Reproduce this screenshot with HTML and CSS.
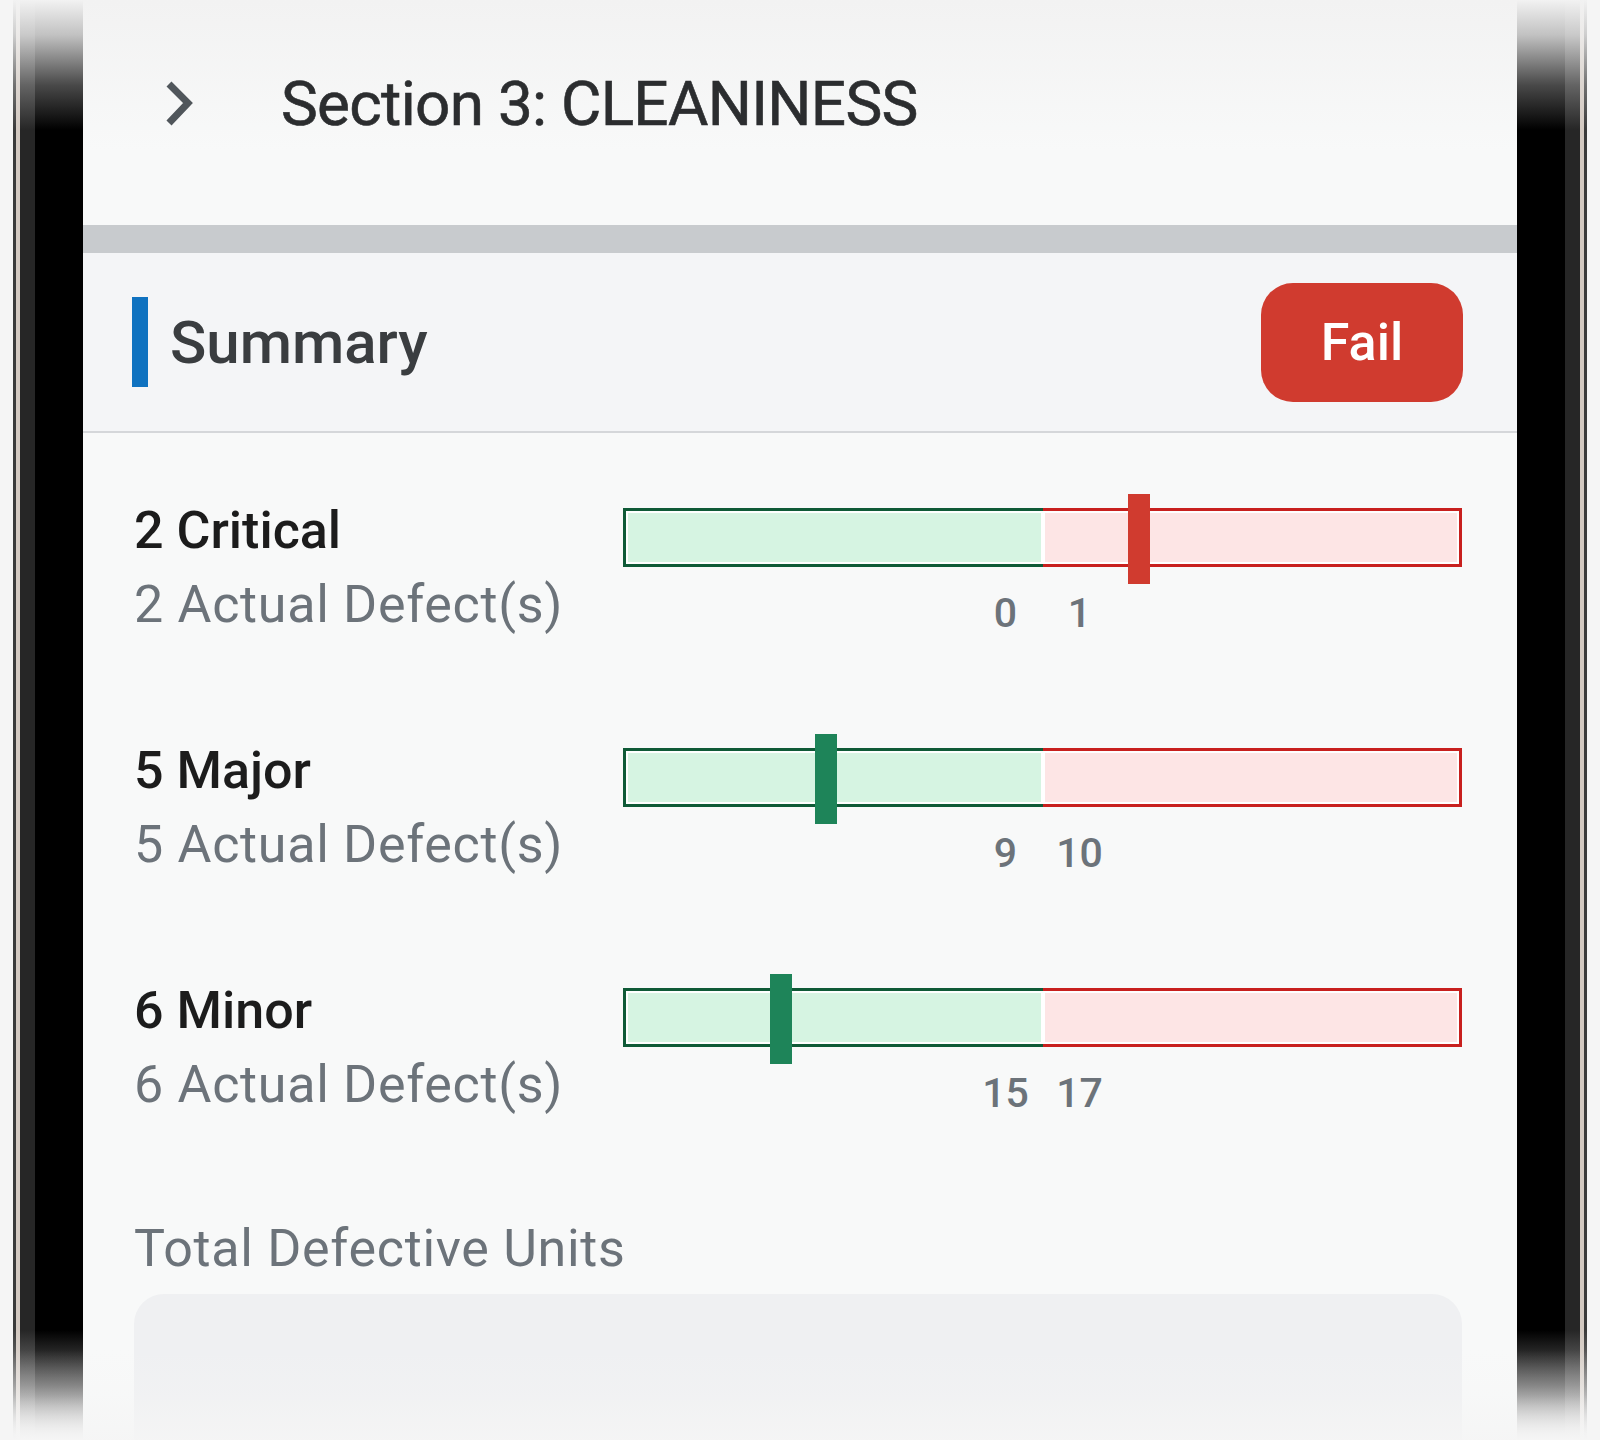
FILE: index.html
```html
<!DOCTYPE html>
<html lang="en">
<head>
  <meta charset="UTF-8">
  <meta name="viewport" content="width=device-width, initial-scale=1">
  <title>Section 3: CLEANINESS - Summary</title>
  <link rel="stylesheet" href="styles.css">
</head>
<body>

  <div class="phone">
    <div class="bezel bezel-left"></div>

    <div class="screen">
      <div class="section-head">
        <svg class="chevron" width="40" height="50" viewBox="0 0 40 50">
          <polyline points="10,5 29,24 10,44" fill="none" stroke="#50565b" stroke-width="7" stroke-linejoin="miter"/>
        </svg>
        <h1 class="section-title">Section 3: CLEANINESS</h1>
      </div>

      <div class="divider"></div>

      <div class="summary-head">
        <div class="summary-label">
          <span class="accent"></span>
          <h2>Summary</h2>
        </div>
        <span class="badge-fail">Fail</span>
      </div>

      <div class="defects">
        <div class="defect-row">
          <div class="defect-text">
            <div class="defect-name">2 Critical</div>
            <div class="defect-count">2 Actual Defect(s)</div>
          </div>
          <div class="gauge">
            <div class="bar">
              <div class="seg seg-ok"></div>
              <div class="seg seg-bad"></div>
              <span class="marker marker-bad" style="left: 61.5%"></span>
            </div>
            <div class="limits"><span>0</span><span>1</span></div>
          </div>
        </div>

        <div class="defect-row">
          <div class="defect-text">
            <div class="defect-name">5 Major</div>
            <div class="defect-count">5 Actual Defect(s)</div>
          </div>
          <div class="gauge">
            <div class="bar">
              <div class="seg seg-ok"></div>
              <div class="seg seg-bad"></div>
              <span class="marker marker-ok" style="left: 24.2%"></span>
            </div>
            <div class="limits"><span>9</span><span>10</span></div>
          </div>
        </div>

        <div class="defect-row">
          <div class="defect-text">
            <div class="defect-name">6 Minor</div>
            <div class="defect-count">6 Actual Defect(s)</div>
          </div>
          <div class="gauge">
            <div class="bar">
              <div class="seg seg-ok"></div>
              <div class="seg seg-bad"></div>
              <span class="marker marker-ok" style="left: 18.8%"></span>
            </div>
            <div class="limits"><span>15</span><span>17</span></div>
          </div>
        </div>

        <div class="field">
          <label class="field-label">Total Defective Units</label>
          <div class="field-box"></div>
        </div>
      </div>
    </div>

    <div class="bezel bezel-right"></div>
  </div>

  <div class="fade-bottom"></div>

</body>
</html>
```

FILE: styles.css
```css
html, body {
  margin: 0;
  height: 1440px;
  overflow: hidden;
}
body {
  font-family: Roboto, "Liberation Sans", Arial, sans-serif;
  background: #f5f5f5;
  position: relative;
}
.phone {
  display: flex;
  height: 1440px;
  padding-left: 13px;
}
.bezel {
  width: 70px;
  flex: none;
}
.bezel-left {
  background:
    linear-gradient(to bottom, rgba(242,242,242,1) 0, rgba(242,242,242,0.8) 35px, rgba(242,242,242,0.3) 85px, rgba(242,242,242,0) 130px, rgba(245,245,245,0) 1330px, rgba(245,245,245,0.4) 1385px, rgba(245,245,245,1) 1440px),
    linear-gradient(to right, #3a3a3a 0, #3a3a3a 3px, #d3c9c1 3px, #d3c9c1 7px, #262626 7px, #262626 22px, #000 22px);
}
.bezel-right {
  background:
    linear-gradient(to bottom, rgba(242,242,242,1) 0, rgba(242,242,242,0.8) 35px, rgba(242,242,242,0.3) 85px, rgba(242,242,242,0) 130px, rgba(245,245,245,0) 1330px, rgba(245,245,245,0.4) 1385px, rgba(245,245,245,1) 1440px),
    linear-gradient(to left, #3a3a3a 0, #3a3a3a 3px, #d3c9c1 3px, #d3c9c1 7px, #262626 7px, #262626 22px, #000 22px);
}
.screen {
  width: 1434px;
  flex: none;
  background: linear-gradient(to bottom, #f2f2f2 0, #f8f9f9 150px);
}

/* section header */
.section-head {
  height: 225px;
  display: flex;
  align-items: center;
  padding-left: 76px;
  box-sizing: border-box;
  padding-bottom: 18px;
}
.chevron {
  display: block;
}
.section-title {
  margin: 0 0 0 82px;
  font-size: 62px;
  font-weight: 400;
  letter-spacing: -0.7px;
  color: #2b2d2f;
  -webkit-text-stroke: 0.6px #2b2d2f;
}
.divider {
  height: 28px;
  background: #c8cbce;
}

/* summary header */
.summary-head {
  height: 178px;
  background: #f4f5f7;
  border-bottom: 2px solid #d5d7da;
  display: flex;
  align-items: center;
  justify-content: space-between;
  padding: 0 54px 0 49px;
}
.summary-label {
  display: flex;
  align-items: center;
}
.accent {
  width: 16px;
  height: 90px;
  background: #0f72c0;
  margin-right: 22px;
}
.summary-label h2 {
  margin: 0;
  font-size: 60px;
  font-weight: 500;
  color: #3a3d40;
}
.badge-fail {
  width: 202px;
  height: 119px;
  border-radius: 32px;
  background: #d03b2f;
  color: #fff;
  font-size: 52px;
  font-weight: 500;
  display: flex;
  align-items: center;
  justify-content: center;
}

/* defect rows */
.defects {
  padding: 61px 55px 0 51px;
}
.defect-row {
  display: flex;
  height: 148px;
  margin-bottom: 92px;
}
.defect-text {
  width: 489px;
  font-size: 52px;
  line-height: 74px;
}
.defect-name {
  font-weight: 500;
  color: #1c1c1c;
}
.defect-count {
  color: #6c737a;
  letter-spacing: 0.7px;
}
.gauge {
  flex: 1;
  padding-top: 14px;
}
.bar {
  position: relative;
  display: flex;
  height: 59px;
}
.seg {
  flex: 1;
  border: 3px solid;
  box-shadow: inset 0 0 0 2px #fff;
}
.seg-ok {
  background: #d6f4e2;
  border-color: #0f5a37;
  border-right: none;
}
.seg-bad {
  background: #fde5e5;
  border-color: #c8201e;
  border-left: none;
}
.marker {
  position: absolute;
  top: -14px;
  width: 22px;
  height: 90px;
  margin-left: -11px;
}
.marker-bad {
  background: #d03b2f;
}
.marker-ok {
  background: #1e8459;
}
.limits {
  display: flex;
  justify-content: center;
  margin-top: 22px;
  font-size: 41px;
  font-weight: 500;
  line-height: 48px;
  color: #6c737a;
}
.limits span {
  width: 74px;
  text-align: center;
}

/* total defective units */
.field {
  margin-top: -2px;
}
.field-label {
  display: block;
  font-size: 52px;
  line-height: 74px;
  color: #6c737a;
  letter-spacing: 0.7px;
}
.field-box {
  margin-top: 8px;
  height: 220px;
  border-radius: 30px;
  background: #eff0f2;
}

/* bottom fade of the device frame */
.fade-bottom {
  position: absolute;
  left: 0;
  right: 0;
  bottom: 0;
  height: 90px;
  pointer-events: none;
  background: linear-gradient(to top, rgba(245,245,245,0.9) 0, rgba(245,245,245,0.3) 50%, rgba(245,245,245,0) 100%);
}
```
